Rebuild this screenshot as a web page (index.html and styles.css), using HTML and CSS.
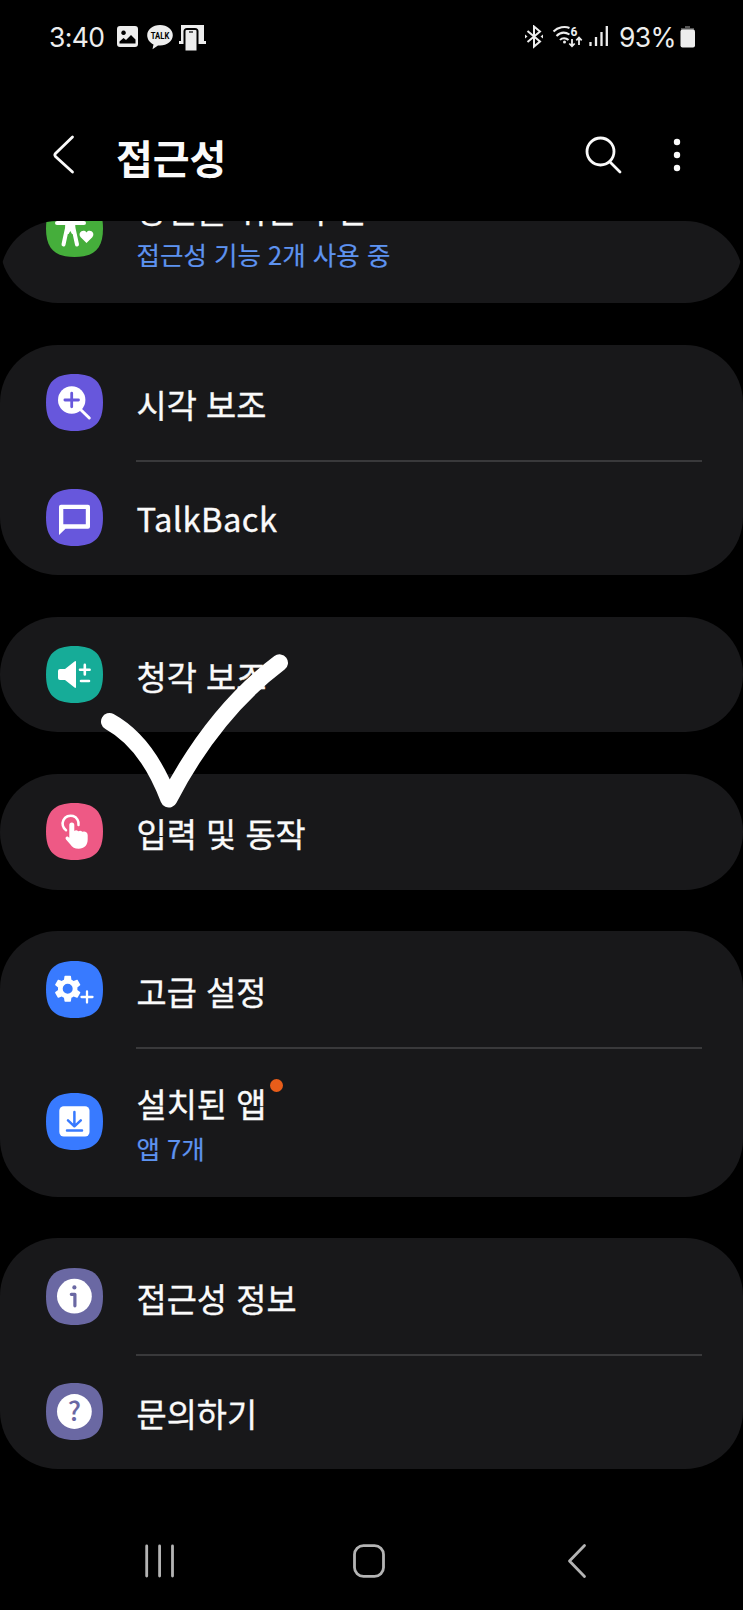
FILE: index.html
```
<!DOCTYPE html>
<html lang="ko">

<head>
  <meta charset="utf-8">
  <title>접근성</title>
  <link rel="stylesheet" href="styles.css">
</head>

<body>
  <div class="status-bar">
    <span class="time">3:40</span>
    <svg class="status-left" width="90" height="26" viewBox="0 0 90 26" fill="#ededed">
      <path fill-rule="evenodd" d="M4 1h15a3 3 0 0 1 3 3v15a3 3 0 0 1-3 3H4a3 3 0 0 1-3-3V4a3 3 0 0 1 3-3zM7.500 5.500a2.300 2.300 0 1 0 .1 0zM3.500 18.500h16v-4l-4.500-4.500-5 5-2.500-2-4 3.500z" />
      <path d="M44 0c7.200 0 12.800 4.500 12.800 10.200S51.200 20.400 44 20.400l-2 0-5.500 3.800 1-4.800c-3.800-1.800-6.300-5.200-6.300-9.200C31.200 4.500 36.800 0 44 0z" />
      <text x="44" y="13.500" text-anchor="middle" textLength="18.500" lengthAdjust="spacingAndGlyphs" class="talk">TALK</text>
      <path d="M65 0h23v16h2v3H63v-3h2z" />
      <path d="M67.500 26V6.500q0-3.500 3.500-3.500h8q3.500 0 3.500 3.500V26z" fill="#000" />
      <path d="M70.500 5h9q1 0 1 1v19.500H69.500V6q0-1 1-1z" />
      <path d="M73 7h4" stroke="#000" stroke-width="1.200" />
    </svg>
    <svg class="status-right" width="86" height="24" viewBox="0 0 86 24" fill="none" stroke="#ededed" stroke-width="2">
      <path d="M3.500 6L16 16.500 10 21.500V1.500l6 5L3.500 17" />
      <path d="M1 9.500v4l2.500-2zM19 9.500v4l-2.500-2z" fill="#ededed" stroke="none" />
      <path d="M29.500 6.500C34 2 41 1 45.500 3M32.500 11c4-4 9-4 13-1.500M36 15c2-2.500 6-2.500 8.500 0" />
      <circle cx="40.500" cy="17" r="1.500" fill="#ededed" stroke="none" />
      <path d="M48 14v7M45.300 18.500L48 21.300l2.700-2.800M55 20v-7M52.300 15.300L55 12.500l2.700 2.800" stroke-width="1.800" />
      <path d="M66.500 17v4M72 12v9M77.500 7v14M82.800 1v20" stroke-width="2.300" />
      <text x="46.500" y="10.500" class="six">6</text>
    </svg>
    <span class="percent">93%</span>
    <svg width="16" height="22" viewBox="0 0 16 22">
      <path d="M5 0h5v2h4v3H1V2h4z" fill="#555" />
      <rect x="0.500" y="3.500" width="14.500" height="18" rx="2" fill="#ededed" />
    </svg>
  </div>

  <div class="header">
    <svg class="back" width="24" height="42" viewBox="0 0 24 42">
      <path d="M20.500 3L3.500 19.500q-1.300 1.500 0 3L20.500 38" />
    </svg>
    <h1>접근성</h1>
    <svg class="search" width="38" height="38" viewBox="0 0 38 38">
      <circle cx="15.500" cy="15.500" r="13.500" />
      <path d="M25 26l10 10" />
    </svg>
    <svg class="more" width="8" height="34" viewBox="0 0 8 34">
      <circle cx="4" cy="4" r="3.200" />
      <circle cx="4" cy="17" r="3.200" />
      <circle cx="4" cy="30" r="3.200" />
    </svg>
  </div>

  <div class="list">
    <div class="card first">
      <div class="row tall">
        <svg class="icon green" viewBox="0 0 57 57">
          <path class="bg" d="M28.500 0C48.500 0 57 8.500 57 28.500S48.500 57 28.500 57 0 48.500 0 28.500 8.500 0 28.500 0z" />
          <circle cx="24" cy="13" r="5" />
          <path class="line" d="M11 23h27M21.500 26l-4 18.500M27 26l4 18.500" stroke-width="4" />
          <path d="M19 23h10.500l-1 11h-2.500l-1.700-3-1.700 3h-2.600z" />
          <path d="M40.500 43l-5.800-5.800c-3.500-4 2.300-9 5.800-4.800 3.500-4.200 9.300.8 5.800 4.800z" />
        </svg>
        <div class="text">
          <div class="title">당신을 위한 추천</div>
          <div class="sub">접근성 기능 2개 사용 중</div>
        </div>
      </div>
    </div>

    <div class="card">
      <div class="row">
        <svg class="icon purple" viewBox="0 0 57 57">
          <path class="bg" d="M28.500 0C48.500 0 57 8.500 57 28.500S48.500 57 28.500 57 0 48.500 0 28.500 8.500 0 28.500 0z" />
          <circle cx="25.700" cy="26" r="13.700" />
          <path class="line" d="M34 35l9.300 9" stroke-width="3" />
          <path class="cut" d="M18.900 26h13.600M25.700 19.200v13.600" stroke-width="2.800" />
        </svg>
        <div class="title">시각 보조</div>
      </div>
      <div class="row">
        <svg class="icon purple" viewBox="0 0 57 57">
          <path class="bg" d="M28.500 0C48.500 0 57 8.500 57 28.500S48.500 57 28.500 57 0 48.500 0 28.500 8.500 0 28.500 0z" />
          <path fill-rule="evenodd" d="M15 15.700h27a2 2 0 0 1 2 2v20a2 2 0 0 1-2 2H19.500L13 46V17.700a2 2 0 0 1 2-2zM17.300 20v15.300h22.500V20z" />
        </svg>
        <div class="title latin">TalkBack</div>
      </div>
    </div>

    <div class="card">
      <div class="row">
        <svg class="icon teal" viewBox="0 0 57 57">
          <path class="bg" d="M28.500 0C48.500 0 57 8.500 57 28.500S48.500 57 28.500 57 0 48.500 0 28.500 8.500 0 28.500 0z" />
          <path d="M14 23h5l9.500-7.500q1.500-1 1.500.5v25q0 1.500-1.500.5L19 34h-5q-2 0-2-2v-7q0-2 2-2z" />
          <path class="line" d="M34 23.700h9.600M38.800 18.900v9.600M35 35h8" stroke-width="2.600" />
        </svg>
        <div class="title">청각 보조</div>
      </div>
    </div>

    <div class="card">
      <div class="row">
        <svg class="icon pink" viewBox="0 0 57 57">
          <path class="bg" d="M28.500 0C48.500 0 57 8.500 57 28.500S48.500 57 28.500 57 0 48.500 0 28.500 8.500 0 28.500 0z" />
          <path class="line" d="M20 27.200A8 8 0 1 1 32.500 22" stroke-width="2.500" />
          <path d="M23.300 22a2.500 2.500 0 0 1 5 0v6q2-1.500 4 .3 2.300-1.300 4 .5 2.300-1 4 .5 1.400 1 1.400 3v4c0 6-3.500 9.500-9 9.500-4 0-6.500-1.500-8.500-4.500L20 36.500c-1.500-2 .8-3.800 2.300-2.500l1 .8z" />
        </svg>
        <div class="title">입력 및 동작</div>
      </div>
    </div>

    <div class="card">
      <div class="row">
        <svg class="icon blue" viewBox="0 0 57 57">
          <path class="bg" d="M28.500 0C48.500 0 57 8.500 57 28.500S48.500 57 28.500 57 0 48.500 0 28.500 8.500 0 28.500 0z" />
          <path transform="translate(5.500 11.500) scale(1.350)" d="M19.140 12.940c.04-.3.060-.61.060-.94 0-.32-.02-.64-.07-.94l2.030-1.580c.18-.14.230-.41.120-.61l-1.920-3.320c-.12-.22-.37-.29-.59-.22l-2.390.96c-.5-.38-1.030-.7-1.620-.94l-.36-2.540c-.04-.24-.24-.41-.48-.41h-3.840c-.24 0-.43.170-.47.410l-.36 2.540c-.59.240-1.130.57-1.620.94l-2.390-.96c-.22-.08-.47 0-.59.220L2.740 8.870c-.12.210-.08.470.12.610l2.030 1.580c-.05.3-.09.630-.09.940s.02.640.07.940l-2.030 1.580c-.18.140-.23.410-.12.610l1.920 3.320c.12.220.37.290.59.220l2.390-.96c.5.380 1.030.7 1.620.94l.36 2.540c.05.240.24.410.48.410h3.840c.24 0 .44-.17.470-.41l.36-2.540c.59-.24 1.130-.56 1.620-.94l2.390.96c.22.080.47 0 .59-.22l1.920-3.320c.12-.22.070-.47-.12-.61l-2.010-1.580zM12 15.700a3.700 3.700 0 1 1 0-7.400 3.700 3.700 0 0 1 0 7.400z" />
          <path class="line" d="M35.500 36h11M41 30.500v11" stroke-width="2.300" />
        </svg>
        <div class="title">고급 설정</div>
      </div>
      <div class="row tall">
        <svg class="icon blue" viewBox="0 0 57 57">
          <path class="bg" d="M28.500 0C48.500 0 57 8.500 57 28.500S48.500 57 28.500 57 0 48.500 0 28.500 8.500 0 28.500 0z" />
          <rect x="13.300" y="13.300" width="30.200" height="30.200" rx="4.500" />
          <path class="cut" d="M28.400 19v14M22 27.300l6.400 6 6.400-6M21 37.500h15" stroke-width="2.500" />
        </svg>
        <div class="text">
          <div class="title">설치된 앱<span class="dot"></span></div>
          <div class="sub">앱 7개</div>
        </div>
      </div>
    </div>

    <div class="card">
      <div class="row">
        <svg class="icon slate" viewBox="0 0 57 57">
          <path class="bg" d="M28.500 0C48.500 0 57 8.500 57 28.500S48.500 57 28.500 57 0 48.500 0 28.500 8.500 0 28.500 0z" />
          <circle cx="28.400" cy="28.200" r="17.400" />
          <circle class="fill-cut" cx="28.400" cy="19.400" r="2.100" />
          <path class="cut" d="M25.300 26.300h3.600v11.500" stroke-width="3.200" />
        </svg>
        <div class="title">접근성 정보</div>
      </div>
      <div class="row">
        <svg class="icon slate" viewBox="0 0 57 57">
          <path class="bg" d="M28.500 0C48.500 0 57 8.500 57 28.500S48.500 57 28.500 57 0 48.500 0 28.500 8.500 0 28.500 0z" />
          <circle cx="28.400" cy="28.500" r="17.400" />
          <text class="fill-cut question" x="28.400" y="38.300" text-anchor="middle">?</text>
        </svg>
        <div class="title">문의하기</div>
      </div>
    </div>
  </div>

  <div class="nav">
    <svg width="32" height="34" viewBox="0 0 32 34">
      <path d="M2.700 2v30M15.600 2v30M28.500 2v30" />
    </svg>
    <svg class="home" width="34" height="34" viewBox="0 0 34 34">
      <rect x="2.500" y="1.600" width="29" height="30.800" rx="9" />
    </svg>
    <svg width="20" height="36" viewBox="0 0 20 36">
      <path d="M17.500 2.500L2.500 18l15 15.500" />
    </svg>
  </div>

  <!-- hand drawn check -->
  <svg class="check" width="200" height="165" viewBox="95 648 200 165">
    <path d="M109.500 721.500Q147 742 168.800 799Q214 712 279.500 662.800" />
  </svg>
</body>

</html>
```
FILE: styles.css
```
body {
  margin: 0;
  width: 743px;
  height: 1610px;
  display: flex;
  flex-direction: column;
  position: relative;
  overflow: hidden;
  background: #000;
  color: #fafafa;
  font-family: "Noto Sans CJK KR", sans-serif;
}

svg {
  flex: none;
  display: block;
}

.status-bar {
  height: 74px;
  padding: 0 47px 0 49px;
  display: flex;
  align-items: center;
  box-sizing: border-box;
  color: #ededed;
  font-family: Inter, sans-serif;
  font-size: 26.5px;
}

.time {
  width: 67px;
  letter-spacing: -0.6px;
}

.status-left {
  margin-top: 2px;
}

.talk {
  font: bold 9px Roboto, sans-serif;
  fill: #000;
}

.six {
  font: bold 12px Roboto, sans-serif;
  fill: #ededed;
  stroke: none;
}

.status-right {
  margin-left: auto;
}

.percent {
  width: 61px;
  margin-left: 9px;
  letter-spacing: -0.6px;
}

.header {
  height: 147px;
  padding: 15px 62px 0 52px;
  display: flex;
  align-items: center;
  box-sizing: border-box;
}

.back,
.search {
  fill: none;
  stroke: #fafafa;
  stroke-width: 2.8px;
  stroke-linecap: round;
}

.header h1 {
  flex: 1;
  margin: 3px 0 0 40px;
  font-size: 40px;
  line-height: 60px;
}

.search {
  margin-right: 50px;
}

.more {
  fill: #fafafa;
}

.list {
  height: 1264px;
  overflow: hidden;
  border-radius: 58px 58px 0 0;
}

.card {
  margin-bottom: 41.8px;
  border-radius: 58px;
  background: #18181a;
}

/* scrolled up under the header */
.card.first {
  margin-top: -68px;
}

.row {
  height: 115.3px;
  padding-left: 46px;
  display: flex;
  align-items: center;
  position: relative;
}

.row.tall {
  height: 150px;
}

.row + .row::before {
  content: "";
  position: absolute;
  top: 0;
  left: 136px;
  right: 41px;
  height: 2px;
  background: #39393b;
}

.icon {
  width: 57px;
  height: 57px;
  margin-right: 33.5px;
  fill: #fff;
}

.icon .bg,
.fill-cut {
  fill: var(--c);
}

.line,
.cut {
  fill: none;
  stroke: #fff;
  stroke-linecap: round;
  stroke-linejoin: round;
}

.cut {
  stroke: var(--c);
}

.green { --c: #45ae3b; }
.purple { --c: #6757dc; }
.teal { --c: #16ac98; }
.pink { --c: #ee5985; }
.blue { --c: #387aff; }
.slate { --c: #6a68a3; }

.question {
  font: 500 27px "Noto Sans CJK KR", sans-serif;
}

.title {
  padding-top: 3px;
  font-size: 32.8px;
  line-height: 48px;
  -webkit-text-stroke: 0.35px;
}

.title.latin {
  padding-top: 0;
  letter-spacing: 0.4px;
}

.sub {
  padding-top: 1px;
  color: #5e93f0;
  font-size: 25.5px;
  line-height: 40px;
  -webkit-text-stroke: 0.2px;
}

.dot {
  position: absolute;
  left: 270px;
  top: 32px;
  width: 13px;
  height: 13px;
  border-radius: 50%;
  background: #e85d1a;
}

.nav {
  flex: 1;
  padding: 27px 156px 0 144px;
  display: flex;
  align-items: center;
  justify-content: space-between;
}

.nav svg {
  fill: none;
  stroke: #b4b4b4;
  stroke-width: 2.8px;
  stroke-linecap: round;
  stroke-linejoin: round;
}

.nav .home {
  margin-right: 6px;
}

.check {
  position: absolute;
  left: 95px;
  top: 648px;
  fill: none;
  stroke: #fff;
  stroke-width: 17px;
  stroke-linecap: round;
  stroke-linejoin: round;
}
```
